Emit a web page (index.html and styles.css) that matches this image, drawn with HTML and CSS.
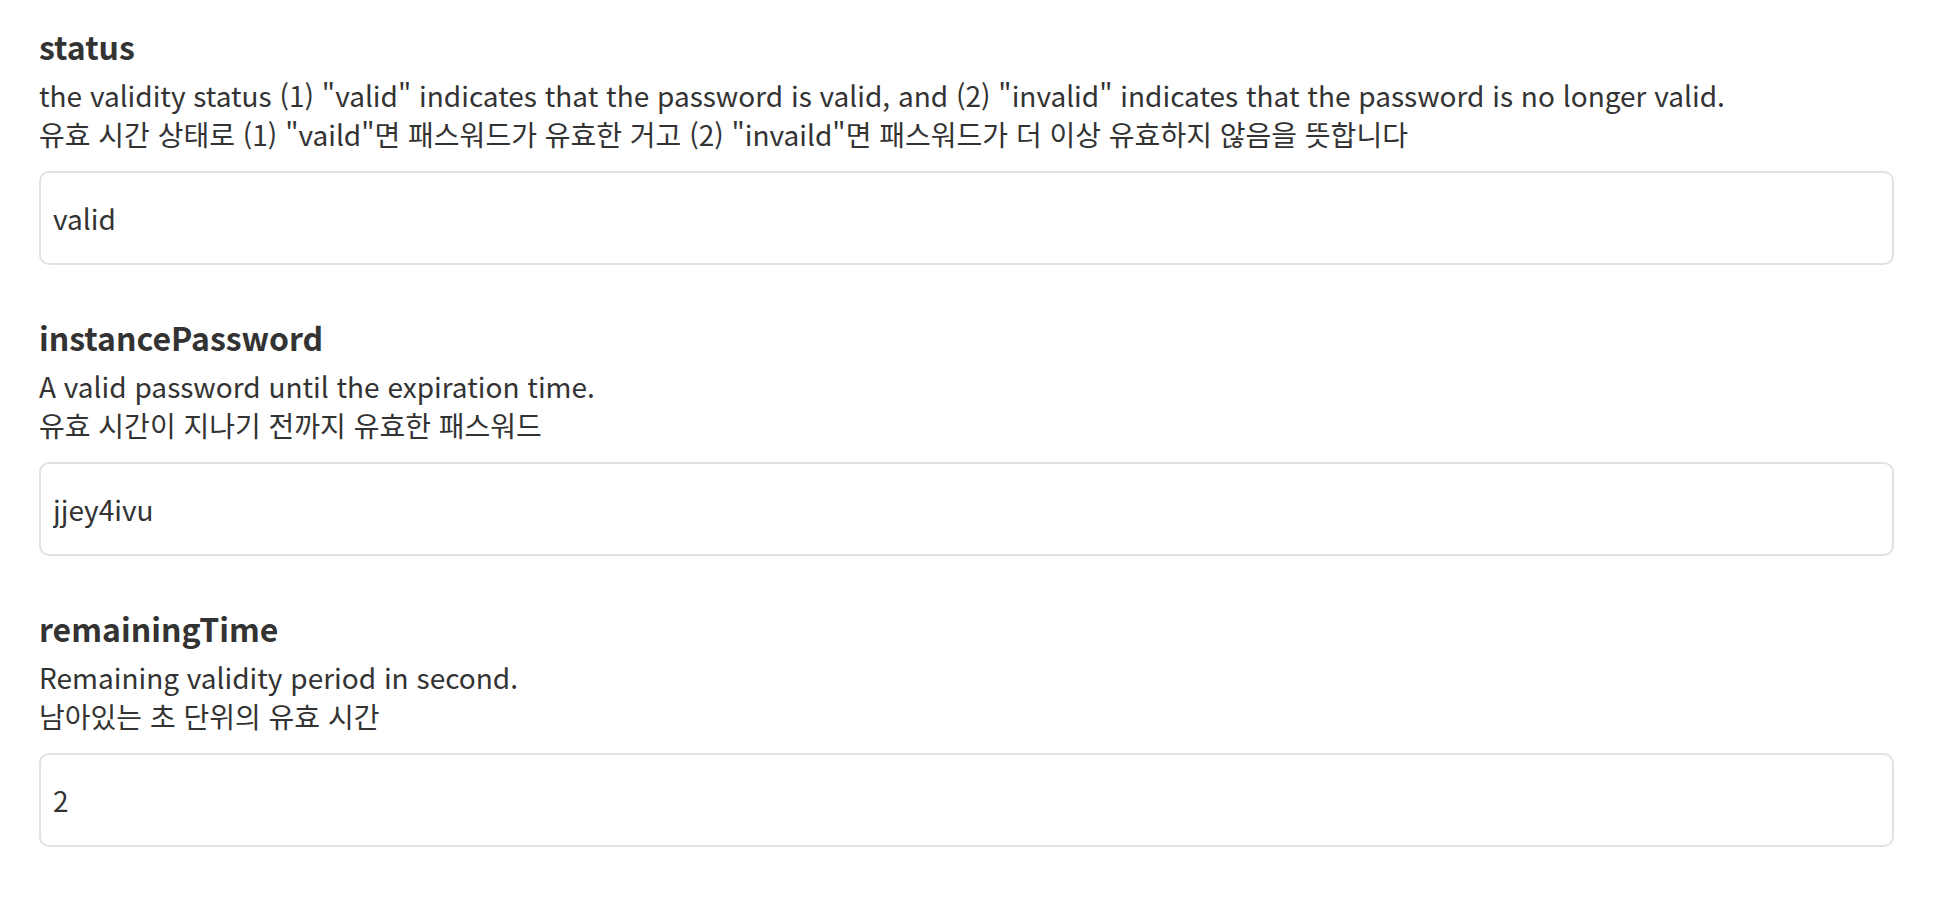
FILE: index.html
```html
<!DOCTYPE html>
<html lang="ko">
<head>
  <meta charset="UTF-8" />
  <meta name="viewport" content="width=device-width, initial-scale=1.0" />
  <title>인스턴스 패스워드</title>
  <link rel="stylesheet" href="styles.css">
</head>
<body>
  <div class="fields">
    <div class="field">
      <h3>status</h3>
      <p class="desc">the validity status (1) "valid" indicates that the password is valid, and (2) "invalid" indicates that the password is no longer valid.<br>유효 시간 상태로 (1) "vaild"면 패스워드가 유효한 거고 (2) "invaild"면 패스워드가 더 이상 유효하지 않음을 뜻합니다</p>
      <input class="value" type="text" value="valid" readonly />
    </div>

    <div class="field">
      <h3>instancePassword</h3>
      <p class="desc">A valid password until the expiration time.<br>유효 시간이 지나기 전까지 유효한 패스워드</p>
      <input class="value" type="text" value="jjey4ivu" readonly />
    </div>

    <div class="field">
      <h3>remainingTime</h3>
      <p class="desc">Remaining validity period in second.<br>남아있는 초 단위의 유효 시간</p>
      <input class="value" type="text" value="2" readonly />
    </div>
  </div>
</body>
</html>
```

FILE: styles.css
```css
body { margin: 0; background: #fff; color: #333; font-family: "Noto Sans CJK KR", "Noto Sans", sans-serif; }
.fields { width: 1855px; padding: 26px 0 0 39px; display: flex; flex-direction: column; gap: 52px; }
.field h3 { margin: 0; font-size: 32px; line-height: 40px; font-weight: 700; }
.field .desc { margin: 10px 0 18px; font-size: 28px; line-height: 38.5px; }
.value { display: block; box-sizing: border-box; width: 100%; height: 94px; padding: 0 12px; border: 2px solid #e2e2e2; border-radius: 10px; font-family: inherit; font-size: 28px; color: #333; background: #fff; outline: none; }
```
